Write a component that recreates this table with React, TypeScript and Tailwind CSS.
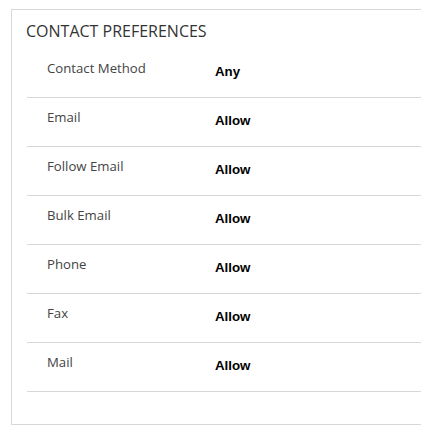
const rows: Array<[string, string]> = [
  ["Contact Method", "Any"],
  ["Email", "Allow"],
  ["Follow Email", "Allow"],
  ["Bulk Email", "Allow"],
  ["Phone", "Allow"],
  ["Fax", "Allow"],
  ["Mail", "Allow"],
];

export default function App() {
  return (
    <div className="w-[421px] h-[444px] bg-white overflow-hidden pt-[9px] pl-[11px] font-['Open_Sans',sans-serif]">
      <div className="w-[430px] border-l border-t border-b border-[#d8d8d8] pb-[32px]">
        <div className="h-[39px] pl-[14px] pt-[10px] text-[16px] leading-[22px] text-[#333]">
          CONTACT PREFERENCES
        </div>
        <div className="ml-[15px]">
          {rows.map(([label, value]) => (
            <div
              key={label}
              className="h-[49px] border-b border-[#d8d8d8] flex items-start"
            >
              <div className="w-[188px] pl-[20px] pt-[10px] text-[13.2px] leading-[18px] text-[#444]">
                {label}
              </div>
              <div className="pt-[15px] text-[13.3px] leading-[16px] font-bold text-black font-['Liberation_Sans',sans-serif]">
                {value}
              </div>
            </div>
          ))}
        </div>
      </div>
    </div>
  );
}
